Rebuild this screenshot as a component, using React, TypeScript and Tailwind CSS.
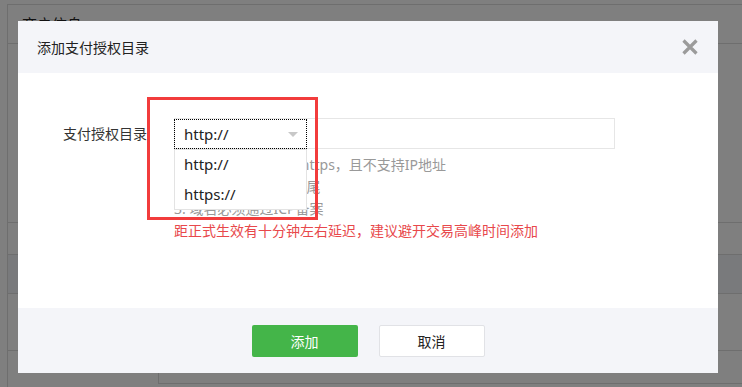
import React from "react";

const font = {
  fontFamily: '"Noto Sans", "Noto Sans CJK SC", sans-serif',
};

export default function App() {
  return (
    <div
      className="relative w-[742px] h-[387px] overflow-hidden bg-white text-[14px] text-[#333]"
      style={font}
    >
      {/* Background page */}
      <div className="flex flex-col pt-[4px] pl-[7px] h-full">
        <div className="border-l border-t border-[#dcdcdc]">
          <div className="h-[39px] flex items-center pl-[14px] border-b border-[#dcdcdc] text-[15px] text-[#222]">
            商户信息
          </div>
          <div className="h-[179px] border-b border-[#dcdcdc]" />
        </div>
        <div className="h-[31px] border-l border-[#dcdcdc]" />
        <div className="flex-1 border-l border-t border-[#dcdcdc] flex flex-col">
          <div className="h-[39px] bg-[#f3f4f8] border-b border-[#dcdcdc]" />
          <div className="h-[57px] border-b border-[#dcdcdc]" />
          <div className="flex pl-[150px]">
            <div className="flex-1 h-[33px] border-l border-b border-[#dcdcdc]" />
          </div>
        </div>
      </div>

      {/* Overlay */}
      <div className="absolute inset-0 bg-black/50" />

      {/* Modal */}
      <div className="absolute left-[18px] top-[21px] w-[700px] h-[352px] bg-white flex flex-col">
        <div className="h-[52px] shrink-0 bg-[#f4f5f9] flex items-center justify-between pl-[19px] pr-[20px]">
          <span className="text-[14px] text-[#222]">添加支付授权目录</span>
          <svg width="16" height="16" viewBox="0 0 16 16">
            <path d="M1.5 1.5 L14.5 14.5 M14.5 1.5 L1.5 14.5" stroke="#9b9b9b" strokeWidth="3.2" />
          </svg>
        </div>

        <div className="h-[235px] shrink-0 pt-[45px] pl-[45px]">
          <div className="flex items-center">
            <div className="w-[111px] text-[14px] text-[#333]">支付授权目录</div>
            <div className="relative w-[441px] h-[31px] border border-[#e6e6e6]">
              <div className="absolute -left-px top-0 w-[133px] h-[30px] border border-dotted border-black flex items-center pl-[9px] text-[15px] text-[#222]">
                http://
                <span className="absolute right-[8px] top-[12px] w-0 h-0 border-l-[5px] border-r-[5px] border-t-[5px] border-l-transparent border-r-transparent border-t-[#c8c8c8]" />
              </div>
              {/* Dropdown */}
              <div className="absolute -left-px top-[30px] w-[133px] h-[61px] bg-white border border-[#e3e3e3] z-10 flex flex-col text-[15px] text-[#222]">
                <div className="h-[30px] flex items-center pl-[9px] pb-[2px]">http://</div>
                <div className="h-[30px] flex items-center pl-[9px]">https://</div>
              </div>
            </div>
          </div>
          <div className="pl-[111px] pt-[5px] leading-[22px] text-[14px]">
            <div className="text-[#999]">1. 协议必须为http或https，且不支持IP地址</div>
            <div className="text-[#999]">2. 目录路径必须以/结尾</div>
            <div className="text-[#999]">3. 域名必须通过ICP备案</div>
            <div className="text-[#e8484b]">距正式生效有十分钟左右延迟，建议避开交易高峰时间添加</div>
          </div>
        </div>

        <div className="flex-1 bg-[#f4f5f9] flex justify-center items-start pt-[17px] gap-[21px]">
          <div className="w-[106px] h-[32px] rounded-[2px] bg-[#44b549] text-white flex items-center justify-center text-[14px]">
            添加
          </div>
          <div className="w-[106px] h-[32px] rounded-[2px] bg-white border border-[#e1e2e6] text-[#222] flex items-center justify-center text-[14px]">
            取消
          </div>
        </div>
      </div>

      {/* Red annotation box */}
      <div className="absolute left-[147px] top-[97px] w-[171px] h-[123px] border-[3px] border-[#f23c3c]" />
    </div>
  );
}
